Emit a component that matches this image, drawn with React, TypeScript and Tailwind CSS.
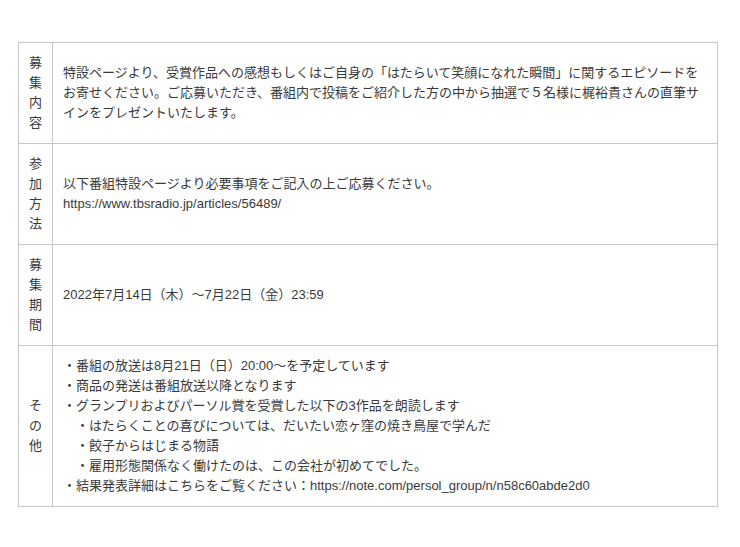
import React from "react";

type Row = {
  label: string;
  lines: string[];
};

const rows: Row[] = [
  {
    label: "募集内容",
    lines: [
      "特設ページより、受賞作品への感想もしくはご自身の「はたらいて笑顔になれた瞬間」に関するエピソードをお寄せください。ご応募いただき、番組内で投稿をご紹介した方の中から抽選で５名様に梶裕貴さんの直筆サインをプレゼントいたします。",
    ],
  },
  {
    label: "参加方法",
    lines: [
      "以下番組特設ページより必要事項をご記入の上ご応募ください。",
      "https://www.tbsradio.jp/articles/56489/",
    ],
  },
  {
    label: "募集期間",
    lines: ["2022年7月14日（木）〜7月22日（金）23:59"],
  },
  {
    label: "その他",
    lines: [
      "・番組の放送は8月21日（日）20:00〜を予定しています",
      "・商品の発送は番組放送以降となります",
      "・グランプリおよびパーソル賞を受賞した以下の3作品を朗読します",
      "　・はたらくことの喜びについては、だいたい恋ヶ窪の焼き鳥屋で学んだ",
      "　・餃子からはじまる物語",
      "　・雇用形態関係なく働けたのは、この会社が初めてでした。",
      "・結果発表詳細はこちらをご覧ください：https://note.com/persol_group/n/n58c60abde2d0",
    ],
  },
];

export default function App() {
  return (
    <div className="min-h-screen bg-white pl-[18px] pt-[42px] font-['Liberation_Sans','Noto_Sans_CJK_JP',sans-serif] text-[13px] leading-[20px] text-[#3a3a3a]">
      <table className="w-[700px] border-collapse border border-[#c6c6c6]">
        <tbody>
          {rows.map((row) => (
            <tr key={row.label} className="border-b border-[#c6c6c6]">
              <th className="w-[34px] border-r border-[#c6c6c6] px-0 py-[10px] text-center align-middle font-normal">
                {row.label.split("").map((ch, i) => (
                  <div key={i}>{ch}</div>
                ))}
              </th>
              <td className="px-[10px] py-[10px] align-middle">
                {row.lines.map((line, i) => (
                  <div key={i}>{line}</div>
                ))}
              </td>
            </tr>
          ))}
        </tbody>
      </table>
    </div>
  );
}
